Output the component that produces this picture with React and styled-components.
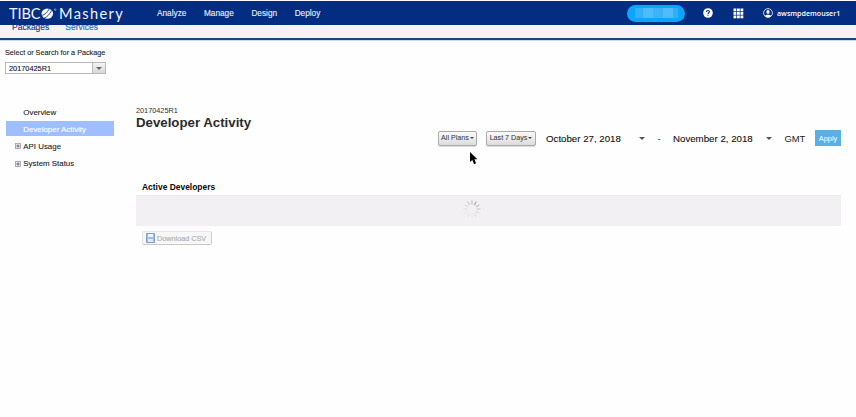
import React from "react";
import styled, { createGlobalStyle } from "styled-components";

const Global = createGlobalStyle`
  * { box-sizing: border-box; }
  body { margin: 0; background: #fefefe; color: #222; font-family: "Liberation Sans", Arial, sans-serif; overflow: hidden; }
  button { font-family: inherit; padding: 0; margin: 0; }
`;

const Page = styled.div`
  width: 856px;
  height: 417px;
  padding-top: 1px;
  overflow: hidden;
`;

const Header = styled.header`
  height: 24px;
  background: #032d80;
  display: flex;
  align-items: center;
  padding: 0 15px 0 9px;
  color: #fff;
`;

const Brand = styled.div`
  width: 148px;
  display: flex;
  align-items: center;
  font: 400 14.6px/24px Lato, sans-serif;
  color: #f2f6ff;
  padding-top: 1px;
`;

const BrandWord = styled.span`
  letter-spacing: ${(p) => p.$spacing};
  margin-left: ${(p) => p.$gap || 0};
`;

const BrandMark = styled.svg`
  width: 17px;
  height: 14px;
  flex: none;
`;

const MainNav = styled.nav`
  display: flex;
  flex: 1;
  gap: 17.6px;
  font-size: 8.25px;
  line-height: 24px;
  padding-top: 1px;
  color: #eaf0fc;
  -webkit-text-stroke: 0.1px currentColor;
`;

const Pill = styled.div`
  width: 58px;
  height: 17px;
  border-radius: 9px;
  background: #0ba5fb;
  display: flex;
  align-items: center;
  justify-content: center;
  margin-right: 18px;
`;

const Redaction = styled.div`
  width: 43px;
  height: 10px;
  background: linear-gradient(90deg, #35b0fa 0 18%, #4dbcfd 18% 42%, #3db2fa 42% 65%, #50bcfc 65% 88%, #32adf8 88%);
`;

const HeaderIcon = styled.svg`
  width: ${(p) => p.$size}px;
  height: ${(p) => p.$size}px;
  flex: none;
  margin-right: ${(p) => p.$gap}px;
`;

const UserName = styled.span`
  width: 64px;
  font: 600 7.1px/24px "Open Sans", sans-serif;
  white-space: nowrap;
`;

const SubNav = styled.nav`
  height: 15px;
  background: #f5f3f5;
  border-bottom: 2px solid #174785;
  box-shadow: 0 1px 0 #c9d9ec;
  display: flex;
  gap: 16px;
  padding-left: 12px;
  overflow: hidden;
`;

const SubTab = styled.a`
  font-size: 8.5px;
  line-height: 10px;
  margin-top: -3px;
  color: ${(p) => (p.$active ? "#1b3d78" : "#1b72b8")};
  -webkit-text-stroke: 0.15px currentColor;
`;

const Picker = styled.section`
  height: 63px;
  padding: 8px 0 0 5px;
`;

const FieldLabel = styled.label`
  display: block;
  font-size: 7.25px;
  line-height: 10px;
  color: #222;
  -webkit-text-stroke: 0.1px currentColor;
`;

const Combo = styled.div`
  width: 101px;
  height: 12px;
  margin-top: 4px;
  display: flex;
  border: 1px solid #b9b9b9;
  background: #fff;
  color: #111;
  font-size: 7.35px;
  line-height: 11px;
  padding-left: 3px;
  justify-content: space-between;
  -webkit-text-stroke: 0.1px currentColor;
`;

const ComboArrow = styled.span`
  width: 13px;
  background: linear-gradient(#f4f4f4, #d8d8d8);
  border-left: 1px solid #b9b9b9;
  display: flex;
  align-items: center;
  justify-content: center;
`;

const Caret = styled.i`
  width: 0;
  height: 0;
  flex: none;
  border: solid transparent;
  border-width: ${(p) => p.$size}px ${(p) => p.$size}px 0;
  border-top-color: ${(p) => p.$color || "#444"};
`;

const Body = styled.div`
  display: flex;
`;

const Sidebar = styled.aside`
  width: 114px;
  padding-left: 6px;
  flex: none;
`;

const SideItem = styled.div`
  height: ${(p) => (p.$active ? 15 : 17.3)}px;
  margin: ${(p) => (p.$active ? "1px 0" : "0")};
  padding-top: 1px;
  background: ${(p) => (p.$active ? "#9fbeff" : "transparent")};
  color: ${(p) => (p.$active ? "#fff" : "#222")};
  font-size: 7.9px;
  display: flex;
  align-items: center;
  white-space: nowrap;
  -webkit-text-stroke: 0.1px currentColor;
`;

const Gutter = styled.span`
  width: 17.3px;
  padding-left: 9px;
  display: flex;
  align-items: center;
`;

const ExpandIcon = styled.svg`
  width: 6px;
  height: 6px;
  flex: none;
`;

const Main = styled.main`
  width: 705px;
  margin-left: 22px;
  padding-top: 3px;
`;

const PackageName = styled.div`
  font-size: 7.3px;
  line-height: 10px;
  color: #333;
`;

const Title = styled.h1`
  margin: 0;
  font-size: 13.25px;
  line-height: 14px;
  color: #2c2c2c;
`;

const Filters = styled.div`
  height: 16px;
  display: flex;
  align-items: center;
  justify-content: flex-end;
  color: #222;
  font-size: 9.7px;
  white-space: nowrap;
`;

const FilterButton = styled.button`
  width: ${(p) => p.$width}px;
  height: 15px;
  margin-right: ${(p) => p.$gap}px;
  border: 1px solid #aaa;
  border-radius: 2px;
  background: linear-gradient(#fafafa, #dcdcdc);
  box-shadow: 0 1px 0 #ddd;
  color: #333;
  font-size: 7.15px;
  display: flex;
  align-items: center;
  justify-content: center;
  gap: 1px;
`;

const DateField = styled.div`
  width: ${(p) => p.$width}px;
  display: flex;
  align-items: center;
  justify-content: space-between;
  color: #111;
  -webkit-text-stroke: 0.1px currentColor;
`;

const Dash = styled.span`
  width: 28px;
  text-align: center;
  color: #333;
`;

const Zone = styled.span`
  width: 30.5px;
  margin-left: 12.5px;
  font-size: 9.4px;
`;

const ApplyButton = styled.button`
  width: 26px;
  height: 16px;
  border: 0;
  background: #59afe8;
  color: #fff;
  font-size: 7.4px;
`;

const PointerRow = styled.div`
  height: 34px;
  padding: 6px 0 0 333px;
`;

const Pointer = styled.svg`
  width: 9px;
  height: 13px;
  display: block;
`;

const SectionTitle = styled.h2`
  margin: 0;
  padding-left: 6px;
  height: 15px;
  font-size: 8.45px;
  line-height: 14px;
  color: #080808;
`;

const LoadingBar = styled.div`
  height: 31px;
  background: #f2f0f2;
  border-top: 1px solid #eae8eb;
  display: flex;
  justify-content: center;
  padding: 3px 34px 0 0;
`;

const Spinner = styled.svg`
  width: 20px;
  height: 20px;
`;

const DownloadButton = styled.button`
  width: 70px;
  height: 14px;
  margin: 5px 0 0 6px;
  border: 1px solid #e5e5e5;
  border-right-color: #cecece;
  border-bottom-color: #c8c8c8;
  border-radius: 2px;
  background: #f7f7f7;
  color: #aaa;
  font-size: 7.25px;
  display: flex;
  align-items: center;
  padding-left: 3px;
  gap: 2px;
  white-space: nowrap;
  -webkit-text-stroke: 0.1px currentColor;
`;

const DiskIcon = styled.svg`
  width: 9px;
  height: 10px;
  flex: none;
`;

const Expander = () => (
  <ExpandIcon viewBox="0 0 6 6">
    <rect x=".5" y=".5" width="5" height="5" fill="#eee" stroke="#9b9ba5" strokeWidth=".8" />
    <path d="M1.3 3h3.4M3 1.3v3.4" stroke="#555565" strokeWidth=".8" />
  </ExpandIcon>
);

const spokes = [
  [0, "#bcbcbe"], [30, "#aaaaae"], [60, "#bdbdc1"], [90, "#cfcfd2"],
  [120, "#dadadd"], [150, "#e0e0e3"], [180, "#e5e4e7"], [210, "#e5e4e7"],
  [240, "#e6e5e8"], [270, "#e1e0e3"], [300, "#dbdade"], [330, "#cccccf"],
];

const sideItems = [
  { label: "Overview" },
  { label: "Developer Activity", active: true },
  { label: "API Usage", expandable: true },
  { label: "System Status", expandable: true },
];

export default function App() {
  return (
    <Page>
      <Global />
      <Header>
        <Brand>
          <BrandWord $spacing="-0.1px">TIBC</BrandWord>
          <BrandMark viewBox="0 0 17 14">
            <ellipse cx="6.3" cy="6.6" rx="5.8" ry="5.2" fill="#f4f7ff" />
            <path d="M1 8.3C4 7.6 6 5.8 8.2 2M3 11.3C6.5 9.8 8.5 7.3 10.8 3.4" fill="none" stroke="#032d80" strokeWidth=".8" />
            <circle cx="14.2" cy="2.6" r=".8" fill="none" stroke="#dce6fa" strokeWidth=".5" />
          </BrandMark>
          <BrandWord $spacing="1.35px" $gap="1.5px">Mashery</BrandWord>
        </Brand>
        <MainNav>
          <span>Analyze</span>
          <span>Manage</span>
          <span>Design</span>
          <span>Deploy</span>
        </MainNav>
        <Pill><Redaction /></Pill>
        <HeaderIcon $size={10} $gap={20} viewBox="0 0 10 10">
          <circle cx="5" cy="5" r="4.8" fill="#fff" />
          <path d="M3.6 4C3.6 2 6.5 2.2 6.4 3.8C6.3 4.7 5 4.8 5 5.9M5 6.8v1" fill="none" stroke="#032d80" strokeWidth="1.1" />
        </HeaderIcon>
        <HeaderIcon $size={11} $gap={19} viewBox="0 0 11 11">
          {[0.5, 4, 7.5].map((y) => [0.5, 4, 7.5].map((x) => (
            <rect key={`${x}-${y}`} x={x} y={y} width="2.8" height="2.8" fill="#fff" />
          )))}
        </HeaderIcon>
        <HeaderIcon $size={10} $gap={4} viewBox="0 0 10 10">
          <circle cx="5" cy="5" r="4.4" fill="none" stroke="#fff" strokeWidth=".8" />
          <ellipse cx="5" cy="3.9" rx="1.6" ry="1.9" fill="#fff" />
          <path d="M2 8.2C2.3 6.3 7.7 6.3 8 8.2C6 9.5 4 9.5 2 8.2Z" fill="#fff" />
        </HeaderIcon>
        <UserName>awsmpdemouser1</UserName>
      </Header>
      <SubNav>
        <SubTab $active>Packages</SubTab>
        <SubTab>Services</SubTab>
      </SubNav>
      <Picker>
        <FieldLabel>Select or Search for a Package</FieldLabel>
        <Combo>
          20170425R1
          <ComboArrow><Caret $size={3} $color="#666" /></ComboArrow>
        </Combo>
      </Picker>
      <Body>
        <Sidebar>
          {sideItems.map((item) => (
            <SideItem key={item.label} $active={item.active}>
              <Gutter>{item.expandable && <Expander />}</Gutter>
              {item.label}
            </SideItem>
          ))}
        </Sidebar>
        <Main>
          <PackageName>20170425R1</PackageName>
          <Title>Developer Activity</Title>
          <Filters>
            <FilterButton $width={39} $gap={9}>All Plans<Caret $size={2} /></FilterButton>
            <FilterButton $width={50} $gap={10}>Last 7 Days<Caret $size={2} /></FilterButton>
            <DateField $width={99}>October 27, 2018<Caret $size={3} $color="#555" /></DateField>
            <Dash>-</Dash>
            <DateField $width={99}>November 2, 2018<Caret $size={3} $color="#555" /></DateField>
            <Zone>GMT</Zone>
            <ApplyButton>Apply</ApplyButton>
          </Filters>
          <PointerRow>
            <Pointer viewBox="0 0 9 13">
              <path d="M1 0v10l2.3-2 1.8 4.2 2-1L5.4 7.2h3z" fill="#050505" />
            </Pointer>
          </PointerRow>
          <SectionTitle>Active Developers</SectionTitle>
          <LoadingBar>
            <Spinner viewBox="-10 -10 20 20">
              {spokes.map(([angle, color]) => (
                <path key={angle} d="M0-4.5V-8.5" stroke={color} strokeWidth="1.2" transform={`rotate(${angle})`} />
              ))}
            </Spinner>
          </LoadingBar>
          <DownloadButton>
            <DiskIcon viewBox="0 0 9 10">
              <path d="M.5.5h8v9h-8z" fill="#9fc0e6" stroke="#7fa0ce" />
              <path d="M2 1h5v3H2z" fill="#eef5fc" />
              <path d="M2 6h5v3H2z" fill="#dfeaf6" />
            </DiskIcon>
            Download CSV
          </DownloadButton>
        </Main>
      </Body>
    </Page>
  );
}
